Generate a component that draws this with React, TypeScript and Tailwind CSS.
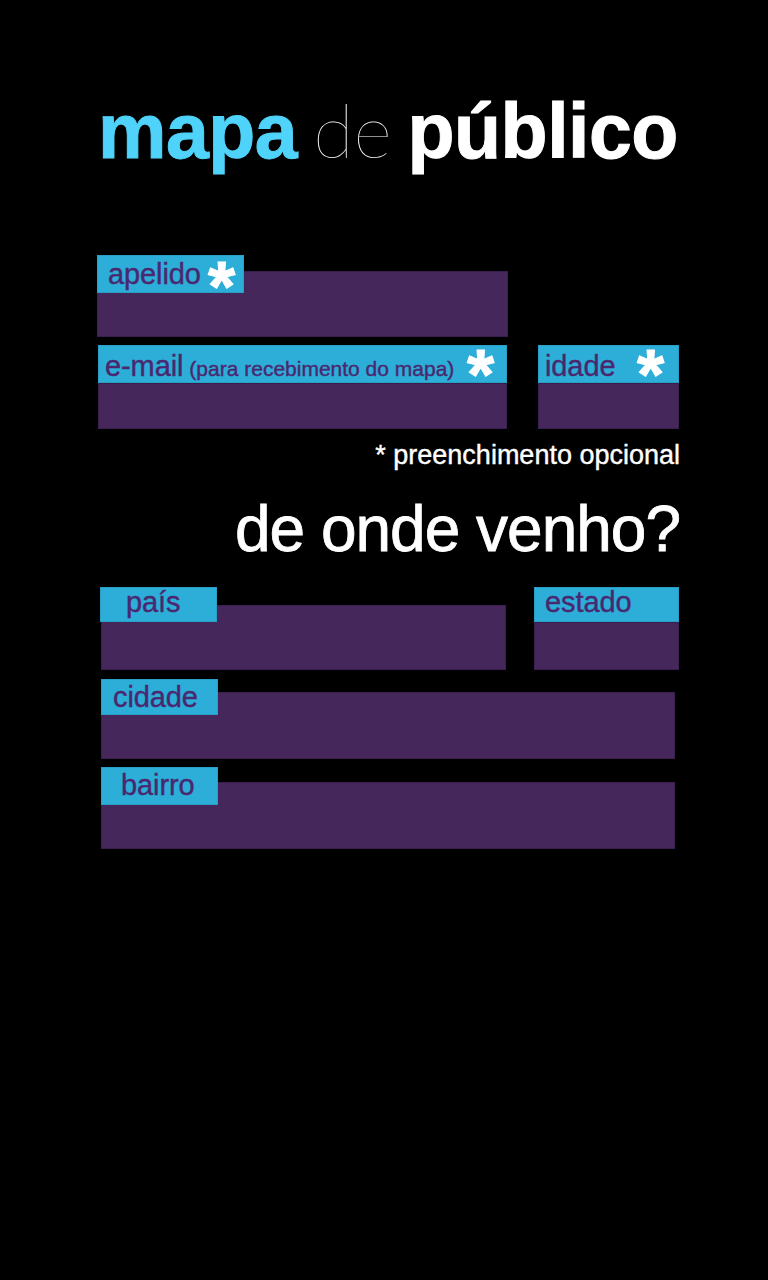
import type { ReactNode } from 'react';

// field label: cyan tab that sits over the purple input box
function Tab({ w, h, pt, pl, children }: { w: string; h: string; pt: string; pl: string; children: ReactNode }) {
  return (
    <div className={`relative z-10 bg-[#2daed8] border border-[#2a9fc6] ${w} ${h} ${pt} ${pl}`}>
      {children}
    </div>
  );
}

function Star({ pos }: { pos: string }) {
  return (
    <span className={`absolute ${pos} text-[70px] leading-none font-bold text-white [-webkit-text-stroke:1px_white]`}>*</span>
  );
}

const label = 'block text-[29px] leading-none text-[#4a2870] tracking-[-0.1px] whitespace-nowrap [-webkit-text-stroke:0.4px_#4a2870]';
const box = 'bg-[#45275c] border border-[#3a1f4e]';

export default function App() {
  return (
    <div className="min-h-[1280px] bg-black font-['Liberation_Sans',Arial,sans-serif]">
      <h1 className="pt-[93px] pl-[98px] flex items-baseline text-[77px] leading-none whitespace-nowrap">
        <span className="font-bold text-[#4fd3fa] tracking-[-0.5px] [-webkit-text-stroke:1px_#4fd3fa]">mapa</span>
        <span className="ml-[16px] font-['Lato',sans-serif] font-thin text-white text-[74px]">de</span>
        <span className="ml-[16px] font-bold text-white tracking-[-0.5px] [-webkit-text-stroke:1px_white]">público</span>
      </h1>

      <div className="ml-[97px] w-[583px] mt-[85px]">
        {/* apelido */}
        <div className="flex flex-col">
          <Tab w="w-[147px]" h="h-[38px]" pt="pt-[4px]" pl="pl-[10px]">
            <span className={label}>apelido</span>
            <Star pos="left-[110px] top-[-4px]" />
          </Tab>
          <div className={`${box} w-[411px] h-[66px] mt-[-22px]`} />
        </div>

        {/* e-mail + idade */}
        <div className="flex mt-[8px] pl-[1px]">
          <div className="w-[409px] flex flex-col">
            <Tab w="w-full" h="h-[38px]" pt="pt-[6px]" pl="pl-[6px]">
              <span className={`${label} flex items-baseline`}>
                e-mail
                <span className="ml-[6px] text-[21px] tracking-[0px]">(para recebimento do mapa)</span>
              </span>
              <Star pos="left-[368px] top-[-6px]" />
            </Tab>
            <div className={`${box} h-[46px]`} />
          </div>
          <div className="w-[141px] ml-[31px] flex flex-col">
            <Tab w="w-full" h="h-[38px]" pt="pt-[6px]" pl="pl-[6px]">
              <span className={label}>idade</span>
              <Star pos="left-[98px] top-[-6px]" />
            </Tab>
            <div className={`${box} h-[46px]`} />
          </div>
        </div>

        <p className="mt-[13px] text-right text-[27px] leading-none text-white tracking-[0px] [-webkit-text-stroke:0.4px_white]">
          * preenchimento opcional
        </p>
        <h2 className="mt-[28px] text-right text-[64px] leading-none text-white tracking-[-1px] [-webkit-text-stroke:0.8px_white]">
          de onde venho?
        </h2>

        {/* país + estado */}
        <div className="flex mt-[26px]">
          <div className="w-[409px] flex flex-col pl-[3px]">
            <Tab w="w-[117px]" h="h-[35px]" pt="pt-[0px]" pl="pl-[25px]">
              <span className={label}>país</span>
            </Tab>
            <div className={`${box} w-[405px] h-[65px] mt-[-17px] ml-[1px]`} />
          </div>
          <div className="w-[145px] ml-[28px] flex flex-col">
            <Tab w="w-full" h="h-[35px]" pt="pt-[0px]" pl="pl-[10px]">
              <span className={label}>estado</span>
            </Tab>
            <div className={`${box} h-[48px]`} />
          </div>
        </div>

        {/* cidade */}
        <div className="flex flex-col mt-[9px] pl-[4px]">
          <Tab w="w-[117px]" h="h-[36px]" pt="pt-[3px]" pl="pl-[11px]">
            <span className={label}>cidade</span>
          </Tab>
          <div className={`${box} w-[574px] h-[67px] mt-[-23px]`} />
        </div>

        {/* bairro */}
        <div className="flex flex-col mt-[8px] pl-[4px]">
          <Tab w="w-[117px]" h="h-[38px]" pt="pt-[3px]" pl="pl-[19px]">
            <span className={label}>bairro</span>
          </Tab>
          <div className={`${box} w-[574px] h-[67px] mt-[-23px]`} />
        </div>
      </div>
    </div>
  );
}
